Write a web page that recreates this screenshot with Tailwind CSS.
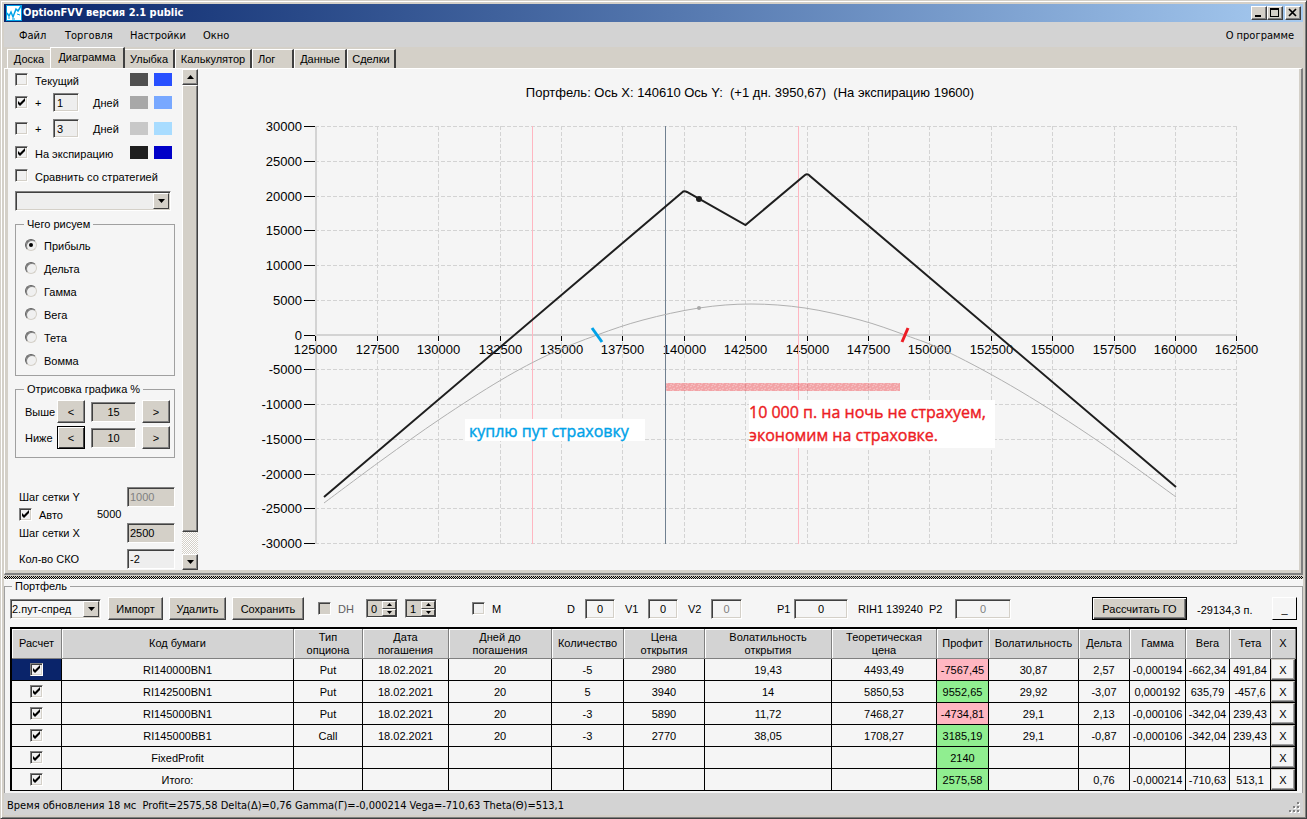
<!DOCTYPE html>
<html lang="ru">
  <head>
    <meta charset="UTF-8" />
    <meta name="viewport" content="width=device-width, initial-scale=1.0" />
    <title>OptionFVV версия 2.1 public</title>
    <script src="https://cdn.jsdelivr.net/npm/@tailwindcss/browser@4"></script>
  </head>
  <body class="bg-[#d4d0c8] font-['Liberation_Sans',Arial,sans-serif] text-[11px] leading-3 text-black">
    <div class="flex flex-col h-screen min-h-[700px] overflow-hidden border border-t-[#d4d0c8] border-l-[#d4d0c8] border-b-[#404040] border-r-[#404040] shadow-[inset_1px_1px_0_#fff,inset_-1px_-1px_0_#808080] p-[3px]">
      <!-- Title bar -->
      <header class="flex items-center h-[18px] shrink-0 bg-linear-to-r from-[#0a246a] to-[#a6caf0] pl-0.5 pr-0.5">
        <svg class="size-4" viewBox="0 0 16 16">
          <rect width="16" height="16" fill="#fff" />
          <path d="M0 0h16v1H0zM0 15h16v1H0zM15 0h1v16h-1zM0 0h1v16H0z" fill="#00a2e8" />
          <path d="M1 8l2 3 2-4 2 5 3-8 2 2 3-5" fill="none" stroke="#00a2e8" stroke-width="1.5" />
          <path d="M2 13h2M6 14h3M11 9l3 1" stroke="#00a2e8" stroke-width="1" />
        </svg>
        <h1 class="ml-px text-white font-bold font-['DejaVu_Sans_Condensed','DejaVu_Sans',sans-serif]">OptionFVV версия 2.1 public</h1>
        <div class="ml-auto flex">
          <button aria-label="Свернуть" class="w-4 h-3.5 bg-[#d4d0c8] border border-t-white border-l-white border-b-[#404040] border-r-[#404040] shadow-[inset_-1px_-1px_0_#808080]">
            <svg class="size-full" viewBox="0 0 14 12"><path d="M3 8h6v2H3z" /></svg>
          </button>
          <button aria-label="Развернуть" class="w-4 h-3.5 bg-[#d4d0c8] border border-t-white border-l-white border-b-[#404040] border-r-[#404040] shadow-[inset_-1px_-1px_0_#808080]">
            <svg class="size-full" viewBox="0 0 14 12"><path d="M2 1h9v9H2zM3 3v6h7V3z" fill-rule="evenodd" /></svg>
          </button>
          <button aria-label="Закрыть" class="ml-0.5 w-4 h-3.5 bg-[#d4d0c8] border border-t-white border-l-white border-b-[#404040] border-r-[#404040] shadow-[inset_-1px_-1px_0_#808080]">
            <svg class="size-full" viewBox="0 0 14 12"><path d="M3 2l7 7M10 2l-7 7" stroke="#000" stroke-width="1.7" /></svg>
          </button>
        </div>
      </header>

      <!-- Menu -->
      <nav class="flex items-center h-[25px] shrink-0 bg-[#d3d3d3] pl-[15px] pr-[9px] pt-0.5 font-['DejaVu_Sans_Condensed','DejaVu_Sans',sans-serif]">
        <a href="#" class="w-[46px]">Файл</a>
        <a href="#" class="w-[65px]">Торговля</a>
        <a href="#" class="w-[73px]">Настройки</a>
        <a href="#">Окно</a>
        <a href="#" class="ml-auto">О программе</a>
      </nav>

      <!-- Tabs -->
      <div class="flex items-end h-[21px] shrink-0 pl-[3px]" role="tablist">
        <button role="tab" class="w-[43px] h-[19px] border-t border-l border-white">Доска</button>
        <button role="tab" aria-selected="true" class="w-[75px] h-[21px] pb-0.5 border-t border-l border-white border-r-2 border-r-[#404040]">Диаграмма</button>
        <button role="tab" class="w-[50px] h-[19px] border-t border-white border-r-2 border-r-[#404040]">Улыбка</button>
        <button role="tab" class="w-[77px] h-[19px] border-t border-l border-white border-r-2 border-r-[#404040]">Калькулятор</button>
        <button role="tab" class="w-[42px] h-[19px] pl-[5px] text-left border-t border-l border-white border-r-2 border-r-[#404040]">Лог</button>
        <button role="tab" class="w-[53px] h-[19px] border-t border-l border-white border-r-2 border-r-[#404040]">Данные</button>
        <button role="tab" class="w-[49px] h-[19px] border-t border-l border-white border-r-2 border-r-[#404040]">Сделки</button>
      </div>

      <!-- Tab page -->
      <main class="flex flex-1 min-h-0 border-t border-l border-white border-b-2 border-b-[#808080] border-r-2 border-r-[#808080]">
        <div class="flex flex-1 min-w-0 border-l-3 border-r-2 border-b-3 border-[#d4d0c8] bg-[#f5f5f5]">
          <aside class="w-[174px] shrink-0 pl-[7px] overflow-hidden">
            <div class="flex items-center h-[21px]">
              <span class="js-check" data-id="cur"></span>
              <label for="cur" class="ml-[7px] w-[95px] pt-0.5">Текущий</label>
              <span class="w-[18px] h-[13px] bg-[#505050]"></span>
              <span class="ml-1.5 w-[18px] h-[13px] bg-[#2850ff]"></span>
            </div>
            <div class="flex items-center h-[25px]">
              <span class="js-check" data-id="day1" data-on="1"></span>
              <label for="day1" class="ml-[7px] w-[18px]">+</label>
              <input aria-label="Дней 1" value="1" class="w-[26px] h-[19px] pl-[3px] bg-[#eee] border border-t-[#808080] border-l-[#808080] border-b-white border-r-white shadow-[inset_1px_1px_0_#404040,inset_-1px_-1px_0_#d4d0c8]" />
              <span class="ml-3.5 w-[37px]">Дней</span>
              <span class="w-[18px] h-[13px] bg-[#a8a8a8]"></span>
              <span class="ml-1.5 w-[18px] h-[13px] bg-[#78a8ff]"></span>
            </div>
            <div class="flex items-center h-[27px]">
              <span class="js-check" data-id="day3"></span>
              <label for="day3" class="ml-[7px] w-[18px]">+</label>
              <input aria-label="Дней 2" value="3" class="w-[26px] h-[19px] pl-[3px] bg-[#eee] border border-t-[#808080] border-l-[#808080] border-b-white border-r-white shadow-[inset_1px_1px_0_#404040,inset_-1px_-1px_0_#d4d0c8]" />
              <span class="ml-3.5 w-[37px]">Дней</span>
              <span class="w-[18px] h-[13px] bg-[#c8c8c8]"></span>
              <span class="ml-1.5 w-[18px] h-[13px] bg-[#a8dcff]"></span>
            </div>
            <div class="flex items-center h-[21px]">
              <span class="js-check" data-id="exp" data-on="1"></span>
              <label for="exp" class="ml-[7px] w-[95px] pt-0.5">На экспирацию</label>
              <span class="w-[18px] h-[13px] bg-[#1e1e1e]"></span>
              <span class="ml-1.5 w-[18px] h-[13px] bg-[#0000c8]"></span>
            </div>
            <div class="flex items-center h-[25px]">
              <span class="js-check" data-id="cmp"></span>
              <label for="cmp" class="ml-[7px] pt-0.5">Сравнить со стратегией</label>
            </div>
            <div class="relative mt-[3px] w-[156px] h-5">
              <select aria-label="Стратегия" class="appearance-none size-full bg-[#eee] border border-t-[#808080] border-l-[#808080] border-b-white border-r-white shadow-[inset_1px_1px_0_#404040,inset_-1px_-1px_0_#d4d0c8]"><option></option></select>
              <span class="absolute right-0.5 top-0.5 bottom-0.5 w-4 grid place-items-center pointer-events-none bg-[#d4d0c8] border border-t-white border-l-white border-b-[#404040] border-r-[#404040]">
                <svg class="w-[7px] h-1" viewBox="0 0 7 4"><path d="M0 0h7L3.500 4z" /></svg>
              </span>
            </div>

            <fieldset class="mt-[7px] w-40 h-[158px] border border-[#a0a0a0] pl-[9px]">
              <legend class="ml-[-1px] px-[3px]">Чего рисуем</legend>
              <div id="radios" class="pt-[3px]"></div>
            </fieldset>

            <fieldset class="mt-[7px] w-40 h-[75px] border border-[#a0a0a0] pl-[9px]">
              <legend class="ml-[-1px] px-[3px]">Отрисовка графика %</legend>
              <div class="flex items-center mt-[5px] h-[23px]">
                <label for="above" class="w-8">Выше</label>
                <button class="w-7 h-[23px] bg-[#d4d0c8] border border-t-white border-l-white border-b-[#404040] border-r-[#404040] shadow-[inset_-1px_-1px_0_#808080]">&lt;</button>
                <input id="above" value="15" class="mx-1.5 w-[45px] h-5 text-center bg-[#d4d0c8] border border-t-[#808080] border-l-[#808080] border-b-white border-r-white shadow-[inset_1px_1px_0_#404040]" />
                <button class="w-7 h-[23px] bg-[#d4d0c8] border border-t-white border-l-white border-b-[#404040] border-r-[#404040] shadow-[inset_-1px_-1px_0_#808080]">&gt;</button>
              </div>
              <div class="flex items-center mt-[3px] h-[23px]">
                <label for="below" class="w-8">Ниже</label>
                <button class="w-7 h-[23px] bg-[#d4d0c8] border border-black shadow-[inset_1px_1px_0_#fff,inset_-1px_-1px_0_#404040]">&lt;</button>
                <input id="below" value="10" class="mx-1.5 w-[45px] h-5 text-center bg-[#d4d0c8] border border-t-[#808080] border-l-[#808080] border-b-white border-r-white shadow-[inset_1px_1px_0_#404040]" />
                <button class="w-7 h-[23px] bg-[#d4d0c8] border border-t-white border-l-white border-b-[#404040] border-r-[#404040] shadow-[inset_-1px_-1px_0_#808080]">&gt;</button>
              </div>
            </fieldset>

            <div class="mt-[29px] pl-1">
              <div class="flex items-center h-5">
                <label for="stepY" class="w-[108px]">Шаг сетки Y</label>
                <input id="stepY" value="1000" disabled class="w-12 h-5 pl-0.5 text-[#808080] bg-[#d4d0c8] border border-t-[#808080] border-l-[#808080] border-b-white border-r-white shadow-[inset_1px_1px_0_#404040]" />
              </div>
              <div class="flex items-center h-4 pb-0.5">
                <span class="js-check" data-id="auto" data-on="1"></span>
                <label for="auto" class="ml-[7px] w-[58px] pt-0.5">Авто</label>
                <span>5000</span>
              </div>
              <div class="flex items-center h-5">
                <label for="stepX" class="w-[108px]">Шаг сетки X</label>
                <input id="stepX" value="2500" class="w-12 h-5 pl-0.5 bg-[#d4d0c8] border border-t-[#808080] border-l-[#808080] border-b-white border-r-white shadow-[inset_1px_1px_0_#404040]" />
              </div>
              <div class="flex items-center mt-1.5 h-5">
                <label for="sko" class="w-[108px]">Кол-во СКО</label>
                <input id="sko" value="-2" class="w-12 h-5 pl-0.5 bg-[#eee] border border-t-[#808080] border-l-[#808080] border-b-white border-r-white shadow-[inset_1px_1px_0_#404040]" />
              </div>
            </div>
          </aside>

          <!-- Scroll bar -->
          <div class="flex flex-col w-4 shrink-0 bg-[repeating-conic-gradient(#fff_0_25%,#d4d0c8_0_50%)] bg-[length:2px_2px]">
            <button aria-label="Вверх" class="h-4 grid place-items-center bg-[#d4d0c8] border border-t-white border-l-white border-b-[#404040] border-r-[#404040] shadow-[inset_-1px_-1px_0_#808080]">
              <svg class="w-[7px] h-1" viewBox="0 0 7 4"><path d="M0 4h7L3.500 0z" /></svg>
            </button>
            <div class="flex-1 mb-[22px] bg-[#d4d0c8] border border-t-white border-l-white border-b-[#404040] border-r-[#404040] shadow-[inset_-1px_-1px_0_#808080]"></div>
            <button aria-label="Вниз" class="h-4 grid place-items-center bg-[#d4d0c8] border border-t-white border-l-white border-b-[#404040] border-r-[#404040] shadow-[inset_-1px_-1px_0_#808080]">
              <svg class="w-[7px] h-1" viewBox="0 0 7 4"><path d="M0 0h7L3.500 4z" /></svg>
            </button>
          </div>

          <!-- Chart -->
          <svg id="chart" class="flex-1 min-w-0 h-full" viewBox="198 69 1101 501"></svg>
        </div>
      </main>

      <!-- Splitter -->
      <div class="h-1 mt-px shrink-0 bg-[repeating-conic-gradient(#000_0_25%,#d4d0c8_0_50%)] bg-[length:2px_2px] border-b border-white"></div>

      <!-- Portfolio -->
      <section class="shrink-0 bg-[#f5f5f5]">
        <fieldset class="border-t border-l border-r border-[#a0a0a0] pl-[5px] pr-[5px] pb-0.5">
          <legend class="ml-0.5 px-[3px]">Портфель</legend>
          <div class="flex items-center h-[23px] mt-[5px]">
            <div class="relative w-[91px] h-5">
              <select aria-label="Портфель" class="appearance-none size-full pl-px bg-[#f5f5f5] border border-t-[#808080] border-l-[#808080] border-b-white border-r-white shadow-[inset_1px_1px_0_#404040,inset_-1px_-1px_0_#d4d0c8]"><option>2.пут-спред</option></select>
              <span class="absolute right-0.5 top-0.5 bottom-0.5 w-4 grid place-items-center pointer-events-none bg-[#d4d0c8] border border-t-white border-l-white border-b-[#404040] border-r-[#404040]">
                <svg class="w-[7px] h-1" viewBox="0 0 7 4"><path d="M0 0h7L3.500 4z" /></svg>
              </span>
            </div>
            <button class="ml-[7px] w-[55px] h-[23px] bg-[#d4d0c8] border border-t-white border-l-white border-b-[#404040] border-r-[#404040] shadow-[inset_-1px_-1px_0_#808080]">Импорт</button>
            <button class="ml-1.5 w-[57px] h-[23px] bg-[#d4d0c8] border border-t-white border-l-white border-b-[#404040] border-r-[#404040] shadow-[inset_-1px_-1px_0_#808080]">Удалить</button>
            <button class="ml-1.5 w-[72px] h-[23px] bg-[#d4d0c8] border border-t-white border-l-white border-b-[#404040] border-r-[#404040] shadow-[inset_-1px_-1px_0_#808080]">Сохранить</button>
            <span class="js-check ml-3.5" data-id="dh" data-off="1"></span>
            <label for="dh" class="ml-[7px] w-7 text-[#606060]">DH</label>
            <div class="js-spin" data-label="DH 1" data-value="0"></div>
            <div class="js-spin ml-[7px]" data-label="DH 2" data-value="1"></div>
            <span class="js-check ml-[35px]" data-id="m"></span>
            <label for="m" class="ml-[7px] w-[75px]">M</label>
            <label for="d" class="w-[18px]">D</label>
            <input id="d" value="0" class="w-[30px] h-5 text-center bg-[#f5f5f5] border border-t-[#808080] border-l-[#808080] border-b-white border-r-white shadow-[inset_1px_1px_0_#404040,inset_-1px_-1px_0_#d4d0c8]" />
            <label for="v1" class="ml-2.5 w-[23px]">V1</label>
            <input id="v1" value="0" class="w-[30px] h-5 text-center bg-[#f5f5f5] border border-t-[#808080] border-l-[#808080] border-b-white border-r-white shadow-[inset_1px_1px_0_#404040,inset_-1px_-1px_0_#d4d0c8]" />
            <label for="v2" class="ml-2.5 w-[23px]">V2</label>
            <input id="v2" value="0" disabled class="w-[31px] h-5 text-center text-[#808080] bg-[#f5f5f5] border border-t-[#808080] border-l-[#808080] border-b-white border-r-white shadow-[inset_1px_1px_0_#404040,inset_-1px_-1px_0_#d4d0c8]" />
            <label for="p1" class="ml-[35px] w-[17px]">P1</label>
            <input id="p1" value="0" class="w-[54px] h-5 text-center bg-[#f5f5f5] border border-t-[#808080] border-l-[#808080] border-b-white border-r-white shadow-[inset_1px_1px_0_#404040,inset_-1px_-1px_0_#d4d0c8]" />
            <span class="ml-2.5 w-[71px] whitespace-nowrap">RIH1 139240</span>
            <label for="p2" class="w-[26px]">P2</label>
            <input id="p2" value="0" disabled class="w-14 h-5 text-center text-[#808080] bg-[#f5f5f5] border border-t-[#808080] border-l-[#808080] border-b-white border-r-white shadow-[inset_1px_1px_0_#404040,inset_-1px_-1px_0_#d4d0c8]" />
            <button class="ml-auto w-[95px] h-[23px] bg-[#d4d0c8] border border-black shadow-[inset_1px_1px_0_#fff,inset_-1px_-1px_0_#404040,inset_-2px_-2px_0_#808080]">Рассчитать ГО</button>
            <span class="ml-2.5 w-[75px] pt-0.5 whitespace-nowrap">-29134,3 п.</span>
            <button class="w-[25px] h-[23px] bg-[#f5f5f5] border border-t-white border-l-white border-b-black border-r-black">_</button>
          </div>

          <table class="mt-[7px] w-full table-fixed border-separate border-spacing-0 border-t-2 border-l-2 border-r border-black text-center">
            <colgroup>
              <col class="w-[50px]" /><col /><col class="w-[69px]" /><col class="w-[86px]" />
              <col class="w-[103px]" /><col class="w-[72px]" /><col class="w-[81px]" /><col class="w-[127px]" />
              <col class="w-[105px]" /><col class="w-[52px]" /><col class="w-[90px]" /><col class="w-[51px]" />
              <col class="w-[56px]" /><col class="w-[44px]" /><col class="w-[41px]" /><col class="w-[25px]" />
            </colgroup>
            <thead><tr id="head"></tr></thead>
            <tbody id="rows"></tbody>
          </table>
        </fieldset>
      </section>

      <!-- Status bar -->
      <footer class="flex items-center h-[22px] shrink-0 bg-[#d3d3d3] pl-[3px] pr-0.5 pt-1 font-['DejaVu_Sans_Condensed','DejaVu_Sans',sans-serif]">
        <span class="whitespace-pre">Время обновления 18 мс  Profit=2575,58 Delta(Δ)=0,76 Gamma(Γ)=-0,000214 Vega=-710,63 Theta(Θ)=513,1</span>
        <svg class="ml-auto mt-1 size-3" viewBox="0 0 12 12">
          <path d="M9 1h2v2H9zM9 5h2v2H9zM5 5h2v2H5zM9 9h2v2H9zM5 9h2v2H5zM1 9h2v2H1z" fill="#fff" />
          <path d="M8 0h2v2H8zM8 4h2v2H8zM4 4h2v2H4zM8 8h2v2H8zM4 8h2v2H4zM0 8h2v2H0z" fill="#808080" />
        </svg>
      </footer>
    </div>

    <script type="text/javascript">
      // tick box with the old 3D frame
      function checkBox(id, on, off) {
        return `<span class="relative block size-[13px]">
          <input type="checkbox" id="${id}" ${on ? "checked" : ""} ${off ? "disabled" : ""} aria-label="${id}"
            class="peer appearance-none block size-[13px] bg-[#f0f0f0] disabled:bg-[#d4d0c8] border border-t-[#808080] border-l-[#808080] border-b-white border-r-white shadow-[inset_1px_1px_0_#404040,inset_-1px_-1px_0_#d4d0c8]" />
          <svg class="absolute inset-0 size-[13px] hidden peer-checked:block pointer-events-none" viewBox="0 0 13 13">
            <path d="M3 5v3l2 2 5-5V2L5 7z" />
          </svg>
        </span>`
      }

      document.querySelectorAll(".js-check").forEach((el) => {
        el.innerHTML = checkBox(el.dataset.id, el.dataset.on, el.dataset.off)
      })

      document.querySelectorAll(".js-spin").forEach((el) => {
        const arrow = (d, label) => `<button aria-label="${label}" class="flex-1 grid place-items-center bg-[#d4d0c8] border border-t-white border-l-white border-b-[#404040] border-r-[#404040]">
          <svg class="w-[5px] h-[3px]" viewBox="0 0 5 3"><path d="${d}" /></svg></button>`
        el.innerHTML = `<div class="flex w-8 h-[19px] p-px bg-[#d4d0c8] border border-t-[#808080] border-l-[#808080] border-b-white border-r-white shadow-[inset_1px_1px_0_#404040,inset_-1px_-1px_0_#404040]">
          <input aria-label="${el.dataset.label}" value="${el.dataset.value}" class="w-3.5 pl-[3px]" />
          <div class="flex flex-1 flex-col">${arrow("M0 3h5L2.500 0z", "Больше")}${arrow("M0 0h5L2.500 3z", "Меньше")}</div>
        </div>`
      })

      document.querySelector("#radios").innerHTML = ["Прибыль", "Дельта", "Гамма", "Вега", "Тета", "Вомма"]
        .map((name, i) => `<div class="flex items-center h-[23px]">
          <span class="relative block size-3">
            <input type="radio" name="draw" id="draw${i}" ${i === 0 ? "checked" : ""}
              class="peer appearance-none block size-3 rounded-full bg-[#f0f0f0] border border-t-[#606060] border-l-[#606060] border-b-[#d4d0c8] border-r-[#d4d0c8] shadow-[inset_1px_1px_0_#808080]" />
            <span class="absolute inset-1 rounded-full bg-black hidden peer-checked:block pointer-events-none"></span>
          </span>
          <label for="draw${i}" class="ml-[7px] pt-0.5">${name}</label>
        </div>`).join("")

      // portfolio table
      const heads = ["Расчет", "Код бумаги", "Тип<br>опциона", "Дата<br>погашения", "Дней до<br>погашения", "Количество",
        "Цена<br>открытия", "Волатильность<br>открытия", "Теоретическая<br>цена", "Профит", "Волатильность",
        "Дельта", "Гамма", "Вега", "Тета", "X"]
      const rows = [
        ["RI140000BN1", "Put", "18.02.2021", "20", "-5", "2980", "19,43", "4493,49", "-7567,45", "30,87", "2,57", "-0,000194", "-662,34", "491,84"],
        ["RI142500BN1", "Put", "18.02.2021", "20", "5", "3940", "14", "5850,53", "9552,65", "29,92", "-3,07", "0,000192", "635,79", "-457,6"],
        ["RI145000BN1", "Put", "18.02.2021", "20", "-3", "5890", "11,72", "7468,27", "-4734,81", "29,1", "2,13", "-0,000106", "-342,04", "239,43"],
        ["RI145000BB1", "Call", "18.02.2021", "20", "-3", "2770", "38,05", "1708,27", "3185,19", "29,1", "-0,87", "-0,000106", "-342,04", "239,43"],
        ["FixedProfit", "", "", "", "", "", "", "", "2140", "", "", "", "", ""],
        ["Итого:", "", "", "", "", "", "", "", "2575,58", "", "0,76", "-0,000214", "-710,63", "513,1"],
      ]

      document.querySelector("#head").innerHTML = heads
        .map((h) => `<th class="h-[30px] p-0 font-normal leading-[13px] whitespace-nowrap bg-[#d3d3d3] border-b border-b-[#808080] border-r border-r-[#808080] shadow-[inset_1px_1px_0_#fff]">${h}</th>`)
        .join("")

      document.querySelector("#rows").innerHTML = rows.map((row, i) => {
        const cells = row.map((value, n) => {
          let bg = "bg-[#f5f5f5]"
          if (n === 8) bg = value.startsWith("-") ? "bg-[#ffb6c1]" : "bg-[#90ee90]"
          return `<td class="h-[22px] p-0 whitespace-nowrap border-r border-b border-black ${bg}">${value}</td>`
        }).join("")
        return `<tr>
          <td class="h-[22px] p-0 border-r border-b border-black ${i === 0 ? "bg-[#0a246a]" : "bg-[#f5f5f5]"}"><div class="flex justify-center">${checkBox("row" + i, true)}</div></td>
          ${cells}
          <td class="h-[22px] p-0 border-r border-b border-black"><button class="block w-full h-[21px] bg-[#f5f5f5] border border-t-[#d4d0c8] border-l-[#d4d0c8] border-b-[#606060] border-r-[#606060] shadow-[inset_-1px_-1px_0_#a0a0a0]">X</button></td>
        </tr>`
      }).join("")

      // chart
      const px = (v) => 315 + ((v - 125000) / 37500) * 921
      const py = (v) => 335 - (v / 30000) * 208.5
      let svg = ""
      for (let v = 125000; v <= 162500; v += 2500) {
        const x = Math.ceil(px(v)) + 0.5
        svg += `<path d="M${x} 126V544" stroke="#d3d3d3" stroke-dasharray="4 2" />`
      }
      for (let v = -30000; v <= 30000; v += 5000) {
        const y = Math.floor(py(v)) + 0.5
        svg += `<path d="M315 ${y}H1237" stroke="#d3d3d3" stroke-dasharray="4 2" />
          <path d="M304 ${y}H315" stroke="#000" />
          <text x="302" y="${y + 4}" text-anchor="end">${v}</text>`
      }
      svg += `<path d="M316 126V544M315 335H1237" stroke="#d3d3d3" stroke-width="2" />`
      for (let v = 125000; v <= 162500; v += 2500) {
        const x = Math.ceil(px(v)) + 0.5
        svg += `<path d="M${x} 336V341" stroke="#000" /><text x="${x}" y="354" text-anchor="middle">${v}</text>`
      }

      // smooth line through the points
      function smooth(p) {
        let d = `M${p[0]}`
        for (let i = 0; i < p.length - 1; i++) {
          const a = p[i - 1] || p[i], b = p[i], c = p[i + 1], e = p[i + 2] || c
          d += `C${b[0] + (c[0] - a[0]) / 6} ${b[1] + (c[1] - a[1]) / 6} ${c[0] - (e[0] - b[0]) / 6} ${c[1] - (e[1] - b[1]) / 6} ${c}`
        }
        return d
      }
      const nextDay = [[324, 503], [382, 460], [440, 419], [501, 380], [550, 354], [597, 335], [643, 320], [699, 308],
        [751, 304], [805, 308], [860, 320], [905, 335], [950, 353], [1020, 391], [1098, 441], [1176, 497]]

      svg += `<path d="M532.5 126V544M798.5 126V544" stroke="#ffb6c1" />
        <path d="M665.5 126V544" stroke="#708090" />
        <path d="${smooth(nextDay)}" fill="none" stroke="#b0b0b0" />
        <circle cx="699" cy="308" r="2" fill="#a8a8a8" />
        <path d="M324 497L682 192.500Q684 190.500 687 192L745.500 225L805 175Q807.500 173 810 176L1176 487" fill="none" stroke="#1e1e1e" stroke-width="2" />
        <circle cx="699" cy="199" r="3" fill="#1e1e1e" />
        <defs><pattern id="grain" width="7" height="5" patternUnits="userSpaceOnUse">
          <path d="M0 1l2-1M4 2l2-1M1 4l2-1M5 5l2-1" stroke="#fff" stroke-opacity=".35" />
        </pattern></defs>
        <rect x="666" y="383" width="234" height="8" fill="#ed1c24" fill-opacity=".38" />
        <rect x="666" y="383" width="234" height="8" fill="url(#grain)" />
        <path d="M592 328L602 342" stroke="#00a2e8" stroke-width="3" />
        <path d="M902 342L908 328" stroke="#ed1c24" stroke-width="3" />
        <rect x="465" y="419" width="180" height="22" fill="#fff" />
        <rect x="749" y="400" width="246" height="48" fill="#fff" />
        <g class="font-['Open_Sans','Noto_Sans',sans-serif] text-base font-medium" stroke-width=".4">
          <text x="469" y="437" fill="#00a2e8" stroke="#00a2e8">куплю пут страховку</text>
          <text x="749" y="418" fill="#ed1c24" stroke="#ed1c24">10 000 п. на ночь не страхуем,</text>
          <text x="749" y="441" fill="#ed1c24" stroke="#ed1c24">экономим на страховке.</text>
        </g>
        <text x="750" y="97" text-anchor="middle" class="whitespace-pre">Портфель: Ось X: 140610 Ось Y:  (+1 дн. 3950,67)  (На экспирацию 19600)</text>`
      const chart = document.querySelector("#chart")
      chart.innerHTML = `<g class="text-[13px]">${svg}</g>`
    </script>
  </body>
</html>
